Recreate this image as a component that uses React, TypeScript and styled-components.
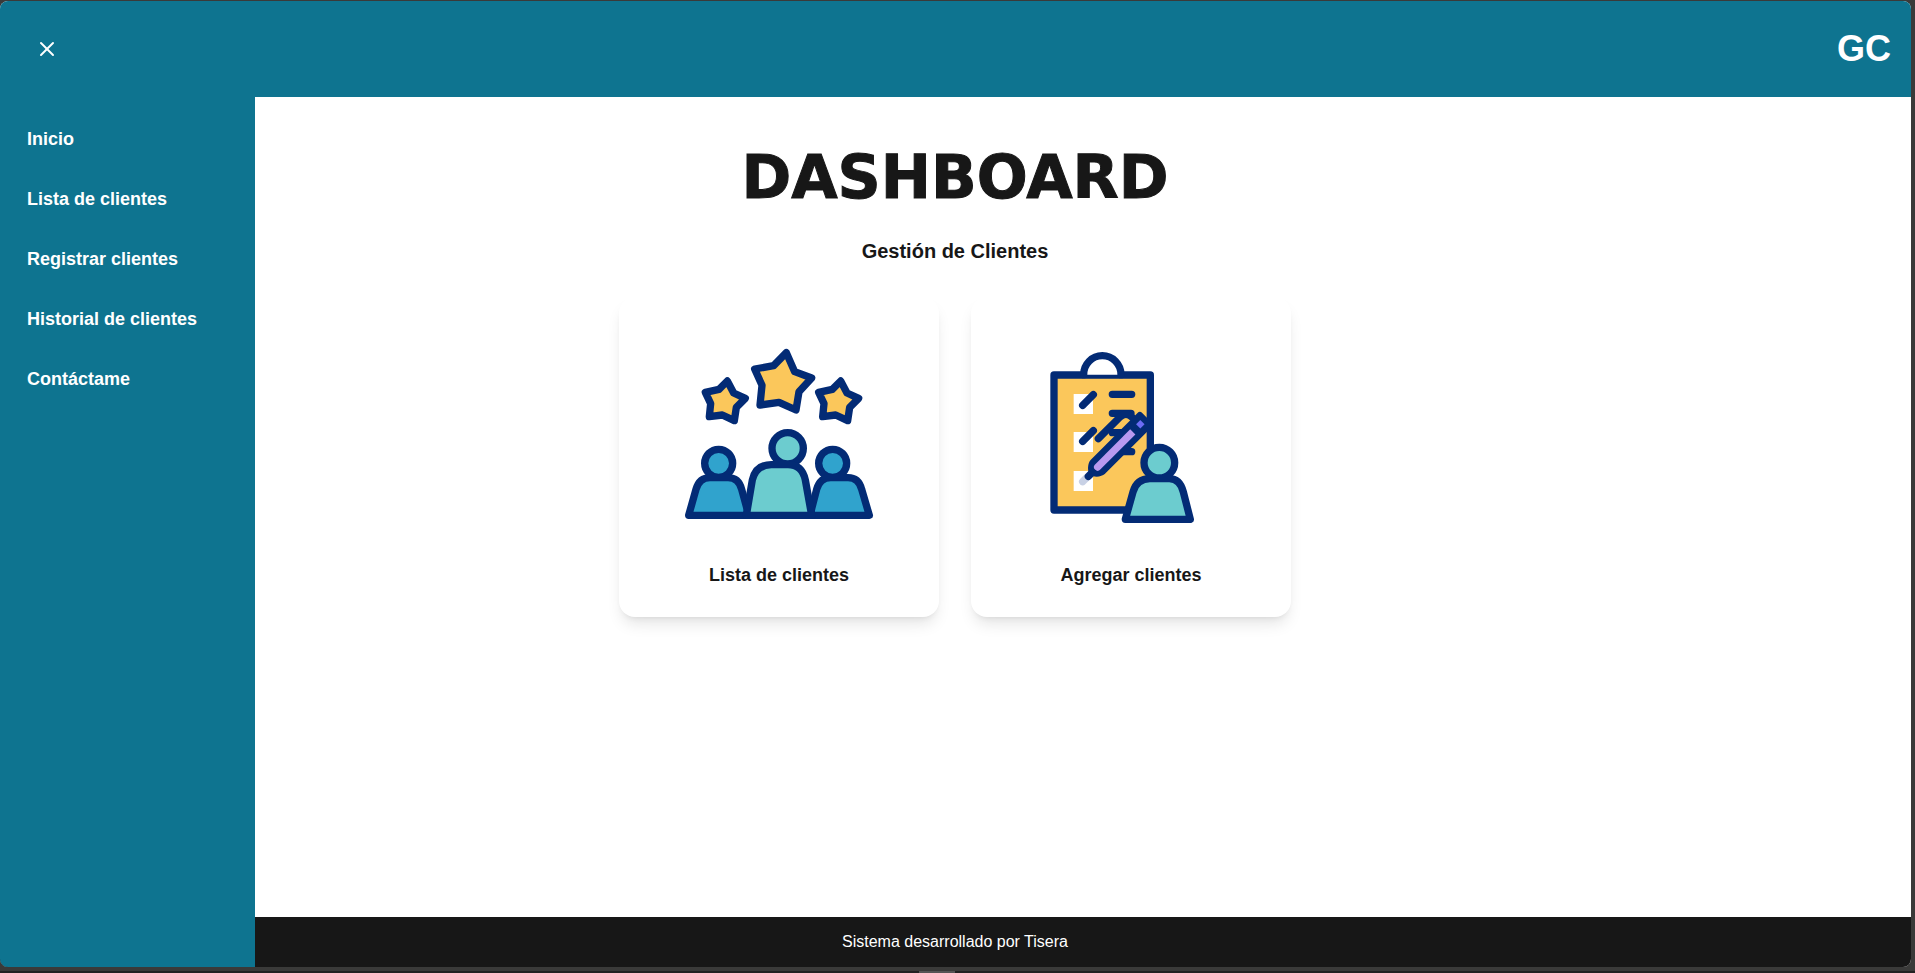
import React from "react";
import styled, { createGlobalStyle } from "styled-components";
import { X } from "lucide-react";

const color = {
  brand: "#0e7490",
  ink: "#171717",
  paper: "#ffffff",
  chrome: "#3a3a39",
  taskbar: "#222222",
  grip: "#555555",
};

const art = {
  navy: "#032b75",
  gold: "#fbc75b",
  teal: "#6ccccf",
  blue: "#30a3cd",
  lilac: "#b899f0",
  violet: "#6c6cf5",
  silver: "#c8d1e5",
};

const GlobalStyle = createGlobalStyle`
  *, *::before, *::after { box-sizing: border-box; }
  body {
    margin: 0;
    background: ${color.chrome};
    color: ${color.ink};
    font-family: "Liberation Sans", Arial, Helvetica, sans-serif;
    font-size: 16px;
    line-height: 24px;
  }
`;

const Desktop = styled.div`
  display: flex;
  flex-direction: column;
  min-height: 100vh;
  background: ${color.chrome};
`;

const AppWindow = styled.div`
  flex: 1;
  display: grid;
  grid-template-columns: 255px 1fr;
  grid-template-rows: 96px 1fr 50px;
  margin: 1px 4px 4px 0;
  border-radius: 8px;
  overflow: hidden;
  background: ${color.paper};
`;

const Taskbar = styled.div`
  display: flex;
  justify-content: center;
  height: 2px;
  background: ${color.taskbar};
`;

const Grip = styled.span`
  width: 36px;
  margin-right: 42px;
  background: ${color.grip};
`;

const Header = styled.header`
  grid-column: 1 / -1;
  grid-row: 1;
  display: flex;
  align-items: center;
  justify-content: space-between;
  padding: 0 20px;
  background: ${color.brand};
  color: ${color.paper};
`;

const MenuButton = styled.button`
  display: flex;
  padding: 15px;
  border: 0;
  background: transparent;
  color: inherit;
  cursor: pointer;
`;

const Brand = styled.span`
  font-size: 36px;
  line-height: 40px;
  font-weight: 700;
`;

const Sidebar = styled.nav`
  grid-column: 1;
  grid-row: 2 / 4;
  z-index: 1;
  padding: 12px 11px;
  background: ${color.brand};
`;

const NavList = styled.ul`
  margin: 0;
  padding: 0;
  list-style: none;
`;

const NavLink = styled.a`
  display: block;
  padding: 16px;
  color: ${color.paper};
  font-size: 18px;
  line-height: 28px;
  font-weight: 700;
  text-decoration: none;
`;

const Main = styled.main`
  grid-column: 1 / -1;
  grid-row: 2;
  display: flex;
  flex-direction: column;
  align-items: center;
  padding: 48px 1px 32px 0;
`;

const Title = styled.h1`
  margin: 0 0 28px;
  font-family: "Arial Black", "DejaVu Sans", sans-serif;
  font-size: 60px;
  line-height: 64px;
  font-weight: 900;
  -webkit-text-stroke: 1px ${color.ink};
`;

const Subtitle = styled.h2`
  margin: 0 0 32px;
  font-size: 20px;
  line-height: 28px;
  font-weight: 700;
`;

const Cards = styled.div`
  display: flex;
  flex-wrap: wrap;
  justify-content: center;
  gap: 32px;
`;

const Card = styled.a`
  display: flex;
  flex-direction: column;
  align-items: center;
  gap: 12px;
  width: 320px;
  padding: 28px;
  border-radius: 16px;
  background: ${color.paper};
  box-shadow: 0 10px 15px -3px rgba(0, 0, 0, 0.1), 0 4px 6px -4px rgba(0, 0, 0, 0.1);
  color: inherit;
  font-size: 18px;
  line-height: 28px;
  font-weight: 700;
  text-decoration: none;
`;

const Illustration = styled.svg`
  width: 224px;
  height: 224px;
  fill: none;
  stroke: ${art.navy};
  stroke-width: 22px;
  stroke-linecap: round;
  stroke-linejoin: round;
`;

const Footer = styled.footer`
  grid-column: 1 / -1;
  grid-row: 3;
  display: flex;
  align-items: center;
  justify-content: center;
  padding-right: 1px;
  background: ${color.ink};
  color: ${color.paper};
`;

const smallStar =
  "M172 153 L191 189 L226 205 L199 232 L193 272 L157 255 L118 260 L122 221 L106 187 L147 178 Z";

const ClientsArt = () => (
  <Illustration viewBox="-9 -15 672 672" aria-hidden="true">
    <g fill={art.gold}>
      <path d={smallStar} />
      <path d={smallStar} transform="translate(340 0)" />
      <path d="M349 68 L374 125 L425 144 L387 185 L378 240 L327 217 L270 225 L276 166 L254 117 L311 107 Z" />
    </g>
    <g fill={art.blue}>
      <circle cx="146" cy="400" r="42" />
      <circle cx="488" cy="400" r="42" />
      <path d="M56 556 L78 478 Q88 443 120 443 H174 Q206 443 215 478 L232 540 V556 Z" />
      <path d="M424 556 V540 L440 478 Q450 443 482 443 H534 Q566 443 575 478 L598 556 Z" />
    </g>
    <g fill={art.teal}>
      <circle cx="353" cy="355" r="47" />
      <path d="M229 556 L247 450 Q258 404 304 404 H354 Q396 404 406 450 L425 556 Z" />
    </g>
  </Illustration>
);

const AddClientArt = () => (
  <Illustration viewBox="-33 -45 672 672" aria-hidden="true">
    <rect x="72" y="105" width="289" height="405" fill={art.gold} />
    <path d="M161 104 A56 57 0 0 1 273 104" fill={color.paper} />
    <g fill={color.paper} stroke="none">
      <rect x="131" y="162" width="58" height="60" />
      <rect x="131" y="276" width="58" height="60" />
      <rect x="131" y="393" width="58" height="60" />
    </g>
    <path d="M158 196 L190 164 M158 304 L190 272" />
    <path d="M247 163 H305 M247 220 H303 M247 278 H290 M270 335 H305" />
    <path d="M205 296 L270 231 Q289 214 306 232" />
    <path d="M158 425 L170 413" stroke={art.silver} />
    <path d="M175 409 L190 394" />
    <g transform="translate(203 381) rotate(-45)" stroke="none">
      <path
        d="M0 -30 H199 Q209 -30 209 -20 V20 Q209 30 199 30 H0 C-12 30 -32 14 -32 0 C-32 -14 -12 -30 0 -30 Z"
        fill={art.navy}
      />
      <path d="M0 -11 H149 V11 H0 A11 11 0 0 1 0 -11 Z" fill={art.lilac} />
      <rect x="172" y="-9" width="18" height="18" fill={art.violet} />
    </g>
    <g fill={art.teal}>
      <circle cx="388" cy="368" r="46" />
      <path d="M286 538 L309 456 Q320 416 360 416 H418 Q450 416 460 456 L481 538 Z" />
    </g>
  </Illustration>
);

const navItems = [
  "Inicio",
  "Lista de clientes",
  "Registrar clientes",
  "Historial de clientes",
  "Contáctame",
];

export default function App() {
  return (
    <Desktop>
      <GlobalStyle />
      <AppWindow>
        <Header>
          <MenuButton type="button" aria-label="Cerrar menú">
            <X size={24} strokeWidth={2} />
          </MenuButton>
          <Brand>GC</Brand>
        </Header>
        <Sidebar>
          <NavList>
            {navItems.map((label) => (
              <li key={label}>
                <NavLink href="#">{label}</NavLink>
              </li>
            ))}
          </NavList>
        </Sidebar>
        <Main>
          <Title>DASHBOARD</Title>
          <Subtitle>Gestión de Clientes</Subtitle>
          <Cards>
            <Card href="#">
              <ClientsArt />
              Lista de clientes
            </Card>
            <Card href="#">
              <AddClientArt />
              Agregar clientes
            </Card>
          </Cards>
        </Main>
        <Footer>Sistema desarrollado por Tisera</Footer>
      </AppWindow>
      <Taskbar>
        <Grip />
      </Taskbar>
    </Desktop>
  );
}
